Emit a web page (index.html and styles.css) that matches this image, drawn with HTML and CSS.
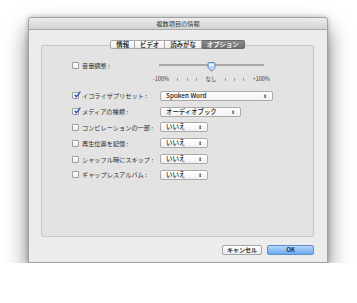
FILE: index.html
```html
<!DOCTYPE html>
<html lang="ja">
<head>
    <meta charset="UTF-8">
    <title>複数項目の情報</title>
    <link rel="stylesheet" href="styles.css">
</head>
<body>
    <div class="window">
        <div class="titlebar">複数項目の情報</div>

        <div class="content">
            <div class="tabs">
                <span class="tab">情報</span>
                <span class="tab">ビデオ</span>
                <span class="tab">読みがな</span>
                <span class="tab active">オプション</span>
            </div>

            <div class="group">
                <div class="row volume-row">
                    <label class="field">
                        <span class="check"></span>
                        <span>音量調整 :</span>
                    </label>
                    <div class="slider">
                        <div class="track">
                            <span class="knob">
                                <svg width="9" height="10" viewBox="0 0 9 10">
                                    <path d="M1 1.5 Q1 .5 2 .5 H7 Q8 .5 8 1.5 V5.5 L4.5 9.3 L1 5.5 Z" fill="#bcd7f3" stroke="#5a7fae" stroke-width=".9"/>
                                    <path d="M2 2 H7 V4 H2 Z" fill="#e6f1fc"/>
                                </svg>
                            </span>
                        </div>
                        <div class="scale">
                            <span>-100%</span>
                            <i></i><i></i><i></i>
                            <span>なし</span>
                            <i></i><i></i><i></i>
                            <span>+100%</span>
                        </div>
                    </div>
                </div>

                <div class="row">
                    <label class="field">
                        <span class="check checked"><svg width="8" height="8" viewBox="0 0 8 8"><path d="M1.6 3.8 L3.3 5.8 L7.4 0.6" fill="none" stroke="#2f5fb8" stroke-width="1.4"/></svg></span>
                        <span>イコライザプリセット :</span>
                    </label>
                    <div class="popup wide">Spoken Word<b>⬍</b></div>
                </div>

                <div class="row">
                    <label class="field">
                        <span class="check checked"><svg width="8" height="8" viewBox="0 0 8 8"><path d="M1.6 3.8 L3.3 5.8 L7.4 0.6" fill="none" stroke="#2f5fb8" stroke-width="1.4"/></svg></span>
                        <span>メディアの種類 :</span>
                    </label>
                    <div class="popup medium">オーディオブック<b>⬍</b></div>
                </div>

                <div class="row">
                    <label class="field">
                        <span class="check"></span>
                        <span>コンピレーションの一部 :</span>
                    </label>
                    <div class="popup small">いいえ<b>⬍</b></div>
                </div>

                <div class="row">
                    <label class="field">
                        <span class="check"></span>
                        <span>再生位置を記憶 :</span>
                    </label>
                    <div class="popup small">いいえ<b>⬍</b></div>
                </div>

                <div class="row">
                    <label class="field">
                        <span class="check"></span>
                        <span>シャッフル時にスキップ :</span>
                    </label>
                    <div class="popup small">いいえ<b>⬍</b></div>
                </div>

                <div class="row">
                    <label class="field">
                        <span class="check"></span>
                        <span>ギャップレスアルバム :</span>
                    </label>
                    <div class="popup small">いいえ<b>⬍</b></div>
                </div>
            </div>
        </div>

        <div class="actions">
            <button type="button" class="btn">キャンセル</button>
            <button type="button" class="btn primary">OK</button>
        </div>
    </div>
</body>
</html>
```

FILE: styles.css
```css
* {
    margin: 0;
    padding: 0;
    box-sizing: border-box;
    font-family: "Noto Sans CJK JP", "Noto Sans", sans-serif;
}

body {
    background: #ffffff;
    padding: 17px 0 0 28px;
    font-size: 6.2px;
    color: #2a2a2a;
}

.window {
    width: 300px;
    height: 246px;
    background: #ececec;
    border: 1px solid #a2a2a2;
    border-radius: 3px 3px 1px 1px;
    box-shadow: 0 12px 22px rgba(0, 0, 0, 0.5), 0 0 5px rgba(0, 0, 0, 0.25);
    display: flex;
    flex-direction: column;
}

.titlebar {
    height: 12px;
    line-height: 11px;
    text-align: center;
    font-size: 6.2px;
    color: #3a3a3a;
    background: linear-gradient(#ececec, #d3d3d3);
    border-bottom: 1px solid #a9a9a9;
    border-radius: 3px 3px 0 0;
}

.content {
    padding: 10px 13px 0 12px;
}

.tabs {
    display: flex;
    justify-content: center;
    height: 9px;
    margin-bottom: -4px;
    position: relative;
    z-index: 1;
}

.tab {
    height: 9px;
    line-height: 8px;
    padding: 0 5px;
    font-size: 6.4px;
    font-weight: 700;
    color: #333;
    background: linear-gradient(#ffffff, #ececec);
    border: 1px solid #a6a6a6;
    border-left: none;
}

.tab:first-child {
    border-left: 1px solid #a6a6a6;
    border-radius: 2px 0 0 2px;
}

.tab.active {
    background: linear-gradient(#8c8c8c, #6f6f6f);
    border-color: #6a6a6a;
    color: #f2f2f2;
    border-radius: 0 2px 2px 0;
}

.group {
    height: 192px;
    background: #e3e3e3;
    border: 1px solid #c6c6c6;
    border-radius: 2px;
    padding: 14px 0 0 30px;
}

.row {
    display: grid;
    grid-template-columns: 88px auto;
    align-items: center;
    height: 15.8px;
}

.volume-row {
    align-items: start;
    height: 28px;
}

.field {
    display: flex;
    align-items: center;
    gap: 3px;
    height: 10px;
    white-space: nowrap;
    color: #2e2e2e;
}

.check {
    width: 7px;
    height: 7px;
    background: linear-gradient(#ffffff, #f1f1f1);
    border: 1px solid #9d9d9d;
    border-radius: 1px;
    position: relative;
    flex: none;
}

.check svg {
    position: absolute;
    left: 0;
    top: -2px;
}

.slider {
    width: 105px;
    margin-left: -1px;
}

.track {
    height: 10px;
    display: flex;
    align-items: center;
    justify-content: center;
    background: linear-gradient(transparent 4px, #a8a8a8 4px, #a8a8a8 6px, transparent 6px);
    border-radius: 1px;
}

.knob {
    display: block;
    height: 10px;
    margin-top: 3px;
}

.scale {
    display: flex;
    justify-content: space-between;
    align-items: center;
    height: 10px;
    margin: 4px -6px 0 -6px;
    font-size: 5.5px;
    color: #3a3a3a;
}

.scale i {
    width: 1px;
    height: 3px;
    background: #9a9a9a;
}

.popup {
    height: 10px;
    line-height: 8px;
    padding: 0 5px;
    display: flex;
    justify-content: space-between;
    background: linear-gradient(#ffffff, #f2f2f2);
    border: 1px solid #a9a9a9;
    border-radius: 2px;
    color: #222;
    font-size: 6.4px;
    font-weight: 500;
}

.popup b {
    font-weight: normal;
    font-size: 5px;
    color: #555;
}

.wide { width: 113px; }
.medium { width: 81px; }
.small { width: 48px; }

.actions {
    display: flex;
    justify-content: flex-end;
    gap: 5px;
    padding: 8px 13px 0 0;
}

.btn {
    height: 10px;
    line-height: 8px;
    width: 40px;
    font-size: 6px;
    font-weight: 700;
    color: #333;
    background: linear-gradient(#ffffff, #ebebeb);
    border: 1px solid #a5a5a5;
    border-radius: 2px;
}

.btn.primary {
    width: 47px;
    background: linear-gradient(#b6d6f8, #6aaaf0);
    border-color: #5e8fc9;
    color: #1f2f45;
}
```
